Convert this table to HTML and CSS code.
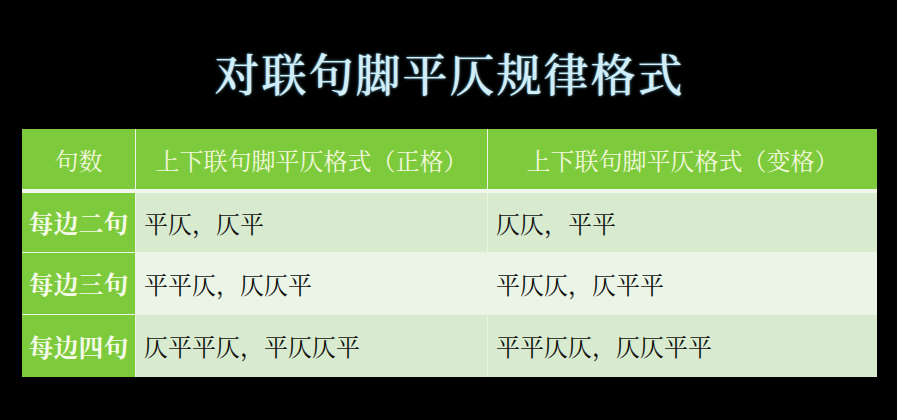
FILE: index.html
```html
<!DOCTYPE html>
<html lang="zh">
<head>
<meta charset="utf-8">
<title>对联句脚平仄规律格式</title>
<link rel="stylesheet" href="styles.css">
</head>
<body>
<h1 class="title">对联句脚平仄规律格式</h1>
<table class="rules">
  <thead>
    <tr>
      <th class="c1">句数</th>
      <th class="c2">上下联句脚平仄格式（正格）</th>
      <th class="c3">上下联句脚平仄格式（变格）</th>
    </tr>
  </thead>
  <tbody>
    <tr class="odd r1">
      <th class="c1">每边二句</th>
      <td>平仄，仄平</td>
      <td>仄仄，平平</td>
    </tr>
    <tr class="even r2">
      <th class="c1">每边三句</th>
      <td>平平仄，仄仄平</td>
      <td>平仄仄，仄平平</td>
    </tr>
    <tr class="odd r3">
      <th class="c1">每边四句</th>
      <td>仄平平仄，平仄仄平</td>
      <td>平平仄仄，仄仄平平</td>
    </tr>
  </tbody>
</table>
</body>
</html>
```

FILE: styles.css
```css
html, body {
  margin: 0;
  padding: 0;
  background: #000;
}
body {
  width: 897px;
  height: 420px;
  overflow: hidden;
  font-family: "Noto Serif CJK SC", "Liberation Serif", "Noto Sans CJK SC", serif;
}
.title {
  margin: 0;
  box-sizing: border-box;
  height: 129px;
  padding-top: 44px;
  line-height: 58px;
  text-align: center;
  font-size: 45px;
  font-weight: 500;
  letter-spacing: 2px;
  text-indent: 2px;
  color: #d2eef8;
  text-shadow: 0 0 3px rgba(120, 200, 230, 0.8), 0 0 1px #bfe6f3;
  font-family: "Noto Serif CJK SC", "Noto Sans CJK SC", serif;
}
.rules {
  margin-left: 22px;
  border-collapse: collapse;
  table-layout: fixed;
  width: 855px;
}
.rules th, .rules td {
  padding: 0;
  border: 1px solid #e9f4e2;
  vertical-align: middle;
}
.rules thead th {
  height: 60px;
  background: #7dcb3c;
  color: #f3f8dc;
  font-weight: 400;
  font-size: 24px;
  text-align: center;
  border-top: none;
  border-bottom: 4px solid #f1f7ec;
}
.rules thead th.c1 { border-left: none; }
.rules thead th.c3 { border-right: none; }
.c1 { width: 113px; }
.c2 { width: 351px; }
.c3 { width: 389px; }
.rules tbody th.c1 {
  background: #7dcb3c;
  color: #f6fae8;
  font-weight: 700;
  font-size: 25px;
  text-align: center;
  border-left: none;
  white-space: nowrap;
}
.rules tbody td {
  font-size: 24px;
  color: #111;
  text-align: left;
  padding-left: 8px;
}
.rules tbody td:last-child { border-right: none; }
.rules tbody tr:last-child th,
.rules tbody tr:last-child td { border-bottom: none; }
.rules tbody tr.odd td { background: #d8ebcf; }
.rules tbody tr.even td { background: #ebf5e7; }
.rules tbody tr.r1 { height: 61px; }
.rules tbody tr.r2 { height: 62px; }
.rules tbody tr.r3 { height: 63px; }
```
